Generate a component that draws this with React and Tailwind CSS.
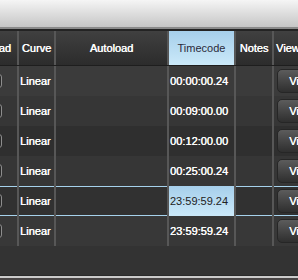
import React from "react";

const cols = "grid grid-cols-[52px_37px_113px_67px_38px_66px]";
const sep = "border-r-2 border-[#575757]";
const bright = "text-white [text-shadow:0.35px_0_0_#fff]";

const rows = [
  { tc: "00:00:00.24", bg: "bg-[#3b3b3b]" },
  { tc: "00:09:00.00", bg: "bg-[#363636]" },
  { tc: "00:12:00.00", bg: "bg-[#2f2f2f]" },
  { tc: "00:25:00.24", bg: "bg-[#363636]" },
  { tc: "23:59:59.24", bg: "bg-[#313131]", selected: true },
  { tc: "23:59:59.24", bg: "bg-[#383838]" },
];

function Row({ row }) {
  return (
    <div
      className={`${cols} h-[30px] ${row.bg} ${
        row.selected ? "shadow-[inset_0_1px_0_#a6d2ec,inset_0_-1px_0_#a6d2ec]" : ""
      }`}
    >
      <div className={`${sep} flex items-center justify-end pr-[15px]`}>
        <div className="h-[14px] w-[13px] rounded-[3px] border border-[#8e8e8e] bg-[#2a2a2a]" />
      </div>
      <div className={`${sep} flex items-center pl-[1px] ${bright}`}>Linear</div>
      <div className={sep} />
      <div
        className={`${sep} flex items-center pl-[1px] ${
          row.selected
            ? "bg-gradient-to-b from-[#a6cfeb] to-[#cbe9f9] text-[#222]"
            : bright
        }`}
      >
        {row.tc}
      </div>
      <div className={sep} />
      <div className="flex items-center pl-[3px]">
        <button
          className={`flex h-[24px] w-[48px] items-center justify-center rounded-[5px] border border-[#262626] bg-gradient-to-b from-[#5c5c5c] to-[#2f2f2f] ${bright}`}
        >
          View
        </button>
      </div>
    </div>
  );
}

export default function App() {
  return (
    <div
      className="h-[280px] w-[298px] overflow-hidden bg-[#333333] text-[11px] leading-none"
      style={{ fontFamily: '"Liberation Sans", Arial, sans-serif' }}
    >
      {/* window chrome */}
      <div className="h-[27px] bg-gradient-to-b from-[#f5f5f5] to-[#c6c6c6]" />
      <div className="h-[2px] bg-[#8a8a8a]" />
      <div className="h-[2px] bg-[#232323]" />

      <div className="ml-[-33px] w-[373px]">
        {/* header */}
        <div
          className={`${cols} h-[35px] border-b border-[#1e1e1e] bg-gradient-to-b from-[#404040] to-[#2c2c2c] ${bright}`}
        >
          <div className={`${sep} flex items-center justify-center`}>Preload</div>
          <div className={`${sep} flex items-center justify-center`}>Curve</div>
          <div className={`${sep} flex items-center justify-center`}>Autoload</div>
          <div
            className={`${sep} flex items-center justify-center bg-gradient-to-b from-[#a6cfeb] to-[#cbe9f9] text-[#2a2a3a] [text-shadow:none]`}
          >
            Timecode
          </div>
          <div className={`${sep} flex items-center justify-center`}>Notes</div>
          <div className="flex items-center pl-[2px]">View</div>
        </div>

        {rows.map((r, i) => (
          <Row key={i} row={r} />
        ))}
      </div>

      <div className="h-[29px]" />
      <div className="h-[1px] bg-[#2a2a2a]" />
      <div className="h-[2px] bg-[#cbcbcb]" />
      <div className="h-[3px] bg-[#4a4646]" />
    </div>
  );
}
